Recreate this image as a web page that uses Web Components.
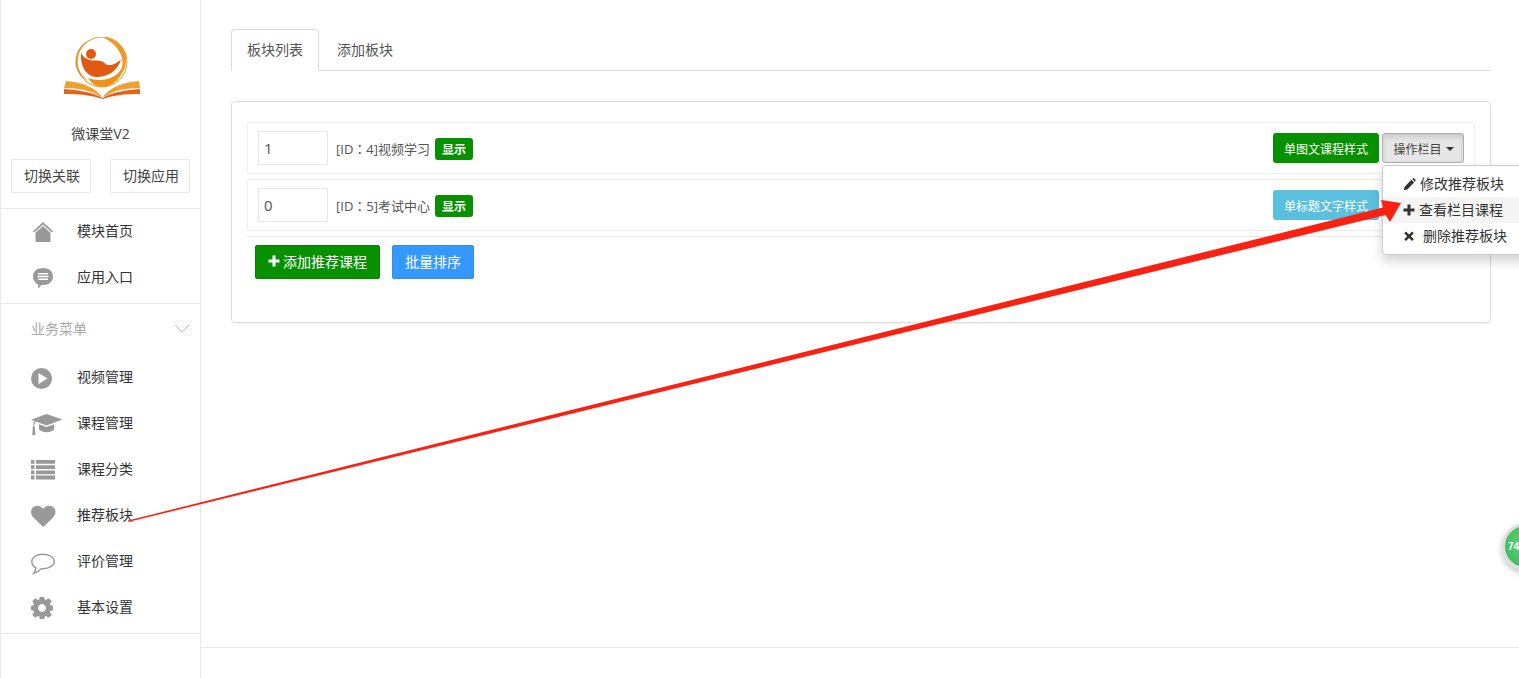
<!DOCTYPE html>
<html lang="zh">
<head>
<meta charset="utf-8">
<title>板块列表</title>
<style>
html, body { margin: 0; height: 100%; overflow: hidden; background: #fff; }
body { font: 14px "Open Sans", "Noto Sans CJK SC", sans-serif; color: #333; }
</style>
</head>
<body>
<wk-app>
  <wk-sidebar slot="side"></wk-sidebar>
  <wk-tabs>
    <span data-active>板块列表</span>
    <span>添加板块</span>
  </wk-tabs>
  <wk-panel>
    <wk-row sort="1" item-id="4" label="视频学习" tag="显示" style-name="单图文课程样式" tone="green" menu></wk-row>
    <wk-row sort="0" item-id="5" label="考试中心" tag="显示" style-name="单标题文字样式" tone="info"></wk-row>
    <wk-actions></wk-actions>
  </wk-panel>
</wk-app>
<wk-arrow></wk-arrow>
<wk-badge>74</wk-badge>

<script>
const FONT = `"Open Sans", "Noto Sans CJK SC", sans-serif`;
const GREEN = "#079100";

const ICONS = {
  home: `<svg viewBox="0 0 20 20" width="20" height="20" style="margin-left:2px"><path d="M10 0 20 9.200 18.800 10.500 10 2.500 1.200 10.500 0 9.200Z"/><path d="M10 4 17.500 10.800V20H2.500V10.800Z"/></svg>`,
  chat: `<svg viewBox="2 2.500 20 20.800" width="20" height="20.800" style="margin-left:2px"><path fill-rule="evenodd" d="M12 2.500C18 2.500 22 6 22 11S18 19.500 12 19.500H10.500L7 23.300 7.200 19C4 17.600 2 14.500 2 11 2 6 6 2.500 12 2.500ZM7 7.500V9H17V7.500ZM6.500 10.300V11.800H17.500V10.300ZM7 13.100V14.600H17V13.100Z"/></svg>`,
  play: `<svg viewBox="1.500 1.500 21 21" width="21" height="21"><path fill-rule="evenodd" d="M12 1.500A10.500 10.500 0 1 1 12 22.500 10.500 10.500 0 0 1 12 1.500ZM9 6.500V17.500L18 12Z"/></svg>`,
  cap: `<svg viewBox="0 0 32 24" width="32" height="24"><path d="M15.500 2 31.500 7.500 15.500 13.500 5 9.600C3.600 11 3.200 12.500 3.300 14.300 4 14.800 4.200 15.600 3.900 16.300L4.400 23H1.200L1.800 16.300C1.500 15.600 1.700 14.800 2.300 14.300 2.200 12.200 2.700 10.500 3.700 9.100L0 7.700Z"/><path d="M8 12.300 15.500 15 23.200 12.200V17.200C21.500 19.200 18.500 20.200 15.500 20.200S9.500 19.200 8 17.300Z"/></svg>`,
  list: `<svg viewBox="0 0 24 20" width="24" height="20"><path d="M0 0H3.500V3.800H0ZM5 0H24V3.800H5ZM0 5.200H3.500V9H0ZM5 5.200H24V9H5ZM0 10.400H3.500V14.200H0ZM5 10.400H24V14.200H5ZM0 15.600H3.500V19.400H0ZM5 15.600H24V19.400H5Z"/></svg>`,
  heart: `<svg viewBox="0 0 1792 1792" width="24.500" height="24.500"><path d="M896 1664q-26 0-44-18l-624-602q-10-8-27.500-26t-55.500-65.500-68-97.500-53.500-121-23.500-138q0-220 127-344t351-124q62 0 126.500 21.500t120 58 95.500 68.500 76 68q36-36 76-68t95.500-68.500 120-58 126.500-21.500q224 0 351 124t127 344q0 221-229 450l-623 600q-18 18-44 18z"/></svg>`,
  bubble: `<svg viewBox="0 0 24 22" width="24" height="22" style="margin-top:3px"><path fill="none" stroke="currentColor" stroke-width="1.400" d="M12 1.200C18.300 1.200 23.200 4.300 23.200 8.500S18.300 15.700 12 15.700H10.300C8.700 17.500 5.700 19.600 2.600 20.400 3.800 19 5 17 5 14.800 2.400 13.500.8 11.200.8 8.500.8 4.300 5.700 1.200 12 1.200Z"/></svg>`,
  gear: `<svg viewBox="176 176 1440 1440" width="22" height="22"><path d="M1152 896q0-106-75-181t-181-75-181 75-75 181 75 181 181 75 181-75 75-181zm512-109v222q0 12-8 23t-20 13l-185 28q-19 54-39 91 35 50 107 138 10 12 10 25t-9 23q-27 37-99 108t-94 71q-12 0-26-9l-138-108q-44 23-91 38-16 136-29 186-7 28-36 28h-222q-14 0-24.500-8.500t-11.500-21.500l-28-184q-49-16-90-37l-141 107q-10 9-25 9-14 0-25-11-126-114-165-168-7-10-7-23 0-12 8-23 15-21 51-66.500t54-70.500q-27-50-41-99l-183-27q-13-2-21-12.500t-8-23.500v-222q0-12 8-23t19-13l186-28q14-46 39-92-40-57-107-138-10-12-10-24 0-10 9-23 26-36 98.500-107.500t94.500-71.500q13 0 26 10l138 107q44-23 91-38 16-136 29-186 7-28 36-28h222q14 0 24.500 8.500t11.500 21.500l28 184q49 16 90 37l142-107q9-9 24-9 13 0 25 10 129 119 165 170 7 8 7 22 0 12-8 23-15 21-51 66.500t-54 70.500q26 50 41 98l183 28q13 2 21 12.500t8 23.500z"/></svg>`,
  plus: `<svg viewBox="0 0 12 12" width="12" height="12"><path d="M4.500 .5H7.500V4.500H11.500V7.500H7.500V11.500H4.500V7.500H.5V4.500H4.500Z"/></svg>`,
  pencil: `<svg viewBox="0 0 12 12" width="13" height="13"><path d="M.8 11.200 1.500 8 7.800 1.700 10.300 4.200 4 10.500ZM8.500 1 9.300.5C9.700.2 10.200.2 10.600.6L11.400 1.400C11.800 1.800 11.800 2.300 11.500 2.700L11 3.500Z"/></svg>`,
  times: `<svg viewBox="0 0 12 12" width="12" height="12"><path d="M3 1.500 6 4.500 9 1.500 10.800 3.300 7.800 6.200 10.800 9.200 9 11 6 8 3 11 1.200 9.200 4.200 6.200 1.200 3.300Z"/></svg>`
};

class WkApp extends HTMLElement {
  constructor() {
    super();
    this.attachShadow({ mode: "open" }).innerHTML = `
      <style>
        :host { display: grid; grid-template-columns: 201px 1fr; height: 678px; font-family: ${FONT}; }
        main { display: flex; flex-direction: column; padding: 29px 28px 0 30px; border-bottom: 1px solid #e7e7eb; height: 648px; box-sizing: border-box; }
        .foot { height: 30px; }
        .col { display: flex; flex-direction: column; min-width: 0; }
      </style>
      <slot name="side"></slot>
      <div class="col">
        <main><slot></slot></main>
        <div class="foot"></div>
      </div>`;
  }
}

class WkSidebar extends HTMLElement {
  constructor() {
    super();
    this.attachShadow({ mode: "open" }).innerHTML = `
      <style>
        :host { display: flex; flex-direction: column; box-sizing: border-box; height: 678px; border-left: 1px solid #e7e7eb; border-right: 1px solid #e7e7eb; color: #333; }
        .head { height: 209px; box-sizing: border-box; border-bottom: 1px solid #e7e7eb; padding-top: 37px; text-align: center; }
        .logo { margin-left: 63px; width: 78px; height: 62px; }
        .name { margin-top: 25px; height: 20px; line-height: 20px; font-size: 14px; color: #444; }
        .btns { display: flex; justify-content: space-between; margin: 15px 10px 0 10px; }
        .btns span { box-sizing: border-box; width: 80px; height: 34px; line-height: 32px; padding-left: 2px; border: 1px solid #e7e7eb; border-radius: 2px; color: #444; }
        .top { height: 95px; box-sizing: border-box; border-bottom: 1px solid #e7e7eb; }
        .group { display: flex; justify-content: space-between; align-items: center; box-sizing: border-box; height: 50px; padding: 0 10px 2px 30px; color: #aaa; }
        .biz { height: 330px; box-sizing: border-box; border-bottom: 1px solid #e7e7eb; }
        .list { padding-top: 1px; }
      </style>
      <div class="head">
        <wk-logo class="logo"></wk-logo>
        <div class="name">微课堂V2</div>
        <div class="btns"><span>切换关联</span><span>切换应用</span></div>
      </div>
      <div class="top">
        <wk-nav icon="home" text="模块首页"></wk-nav>
        <wk-nav icon="chat" text="应用入口"></wk-nav>
      </div>
      <div class="biz">
        <div class="group">业务菜单
          <svg width="16" height="9" viewBox="0 0 16 9"><path d="M1 1 8 8 15 1" fill="none" stroke="#bbb"/></svg>
        </div>
        <div class="list">
          <wk-nav icon="play" text="视频管理"></wk-nav>
          <wk-nav icon="cap" text="课程管理"></wk-nav>
          <wk-nav icon="list" text="课程分类"></wk-nav>
          <wk-nav icon="heart" text="推荐板块"></wk-nav>
          <wk-nav icon="bubble" text="评价管理"></wk-nav>
          <wk-nav icon="gear" text="基本设置"></wk-nav>
        </div>
      </div>`;
  }
}

class WkNav extends HTMLElement {
  constructor() {
    super();
    this.attachShadow({ mode: "open" }).innerHTML = `
      <style>
        :host { display: flex; align-items: center; box-sizing: border-box; height: 46px; padding: 0 0 4px 30px; color: #333; }
        i { display: flex; align-items: center; width: 46px; padding-top: 4px; color: #999; fill: #999; }
      </style>
      <i>${ICONS[this.getAttribute("icon")]}</i><span>${this.getAttribute("text")}</span>`;
  }
}

class WkLogo extends HTMLElement {
  constructor() {
    super();
    this.attachShadow({ mode: "open" }).innerHTML = `
      <style>:host { display: block; } svg { display: block; }</style>
      <svg viewBox="0 0 78 62" width="78" height="62">
        <circle cx="38" cy="25" r="25" fill="none" stroke="#ef9a2d" stroke-width="1"/>
        <path d="M38 0C50 0 60 8 62 19 63 27 60 35 55 40 59 32 60 24 56 16 52 8 45 3 38 0Z" fill="#ef9a2d"/>
        <path d="M30 1.500C19 5 12 15 13.500 27 14.500 34 18 39 24 43.500 16 40 11.500 33 11.500 25 11.500 13 19 4 30 1.500Z" fill="#ec8b20"/>
        <circle cx="27" cy="17" r="5" fill="#e05a12"/>
        <path d="M17 16C20 21 24 23 29 23.500 35 23 40 24 42 27.500 47 29 52 27 57 22.500 54 33 45 39.500 34 40 23 40.500 16 30 17 16Z" fill="#e05a12"/>
        <path d="M60 25C58 35 50 41 41 42.500 35 43.500 29 43 24 41 27 47 34 51 42 49.500 52 47 60 38 60 25Z" fill="#ee9316"/>
        <path d="M2 44C15 45 29 49 37 58.500V60C29 54 15 51 0 51Z" fill="#f0a030"/>
        <path d="M75 44C62 45 48 49 40 58.500V60C48 54 62 51 76 51Z" fill="#f0a030"/>
        <path d="M0 52C14 53 29 55 38.500 61 48 55 62 53 76 52V57C62 57 50 58 38.500 62 27 58 14 57 0 57Z" fill="#e2631a"/>
      </svg>`;
  }
}

class WkTabs extends HTMLElement {
  constructor() {
    super();
    this.attachShadow({ mode: "open" }).innerHTML = `
      <style>
        :host { display: flex; height: 42px; box-sizing: border-box; border-bottom: 1px solid #ddd; color: #555; }
        ::slotted(span) { box-sizing: border-box; height: 42px; line-height: 40px; padding: 0 15px; white-space: nowrap; border: 1px solid transparent; border-radius: 4px 4px 0 0; margin-right: 2px; }
        ::slotted([data-active]) { border-color: #ddd #ddd #fff; background: #fff; }
      </style>
      <slot></slot>`;
  }
}

class WkPanel extends HTMLElement {
  constructor() {
    super();
    this.attachShadow({ mode: "open" }).innerHTML = `
      <style>
        :host { display: block; box-sizing: border-box; margin-top: 30px; height: 222px; padding: 20px 15px 0; border: 1px solid #ddd; border-radius: 4px; box-shadow: 0 1px 1px rgba(0,0,0,.05); }
      </style>
      <slot></slot>`;
  }
}

class WkDropdown extends HTMLElement {
  constructor() {
    super();
    this.attachShadow({ mode: "open" }).innerHTML = `
      <style>
        :host { display: block; position: relative; margin-left: 3px; font-size: 12px; color: #333; }
        .toggle { display: flex; align-items: center; justify-content: center; gap: 3px; box-sizing: border-box; width: 82px; height: 30px; padding: 1px 0 0 1px; background: #e6e6e6; border: 1px solid #adadad; border-radius: 3px; box-shadow: inset 0 3px 5px rgba(0,0,0,.125); color: #444; }
        .caret { width: 0; height: 0; border: 4px solid transparent; border-top-color: #333; border-bottom: 0; margin-left: 1px; }
        ul { position: absolute; top: 32px; left: 0; width: 160px; box-sizing: border-box; margin: 0; padding: 5px 0; list-style: none; background: #fff; border: 1px solid #ccc; border-radius: 4px; box-shadow: 0 6px 12px rgba(0,0,0,.175); font-size: 14px; color: #333; }
        li { display: flex; align-items: center; height: 26px; padding-left: 20px; }
        li span { position: relative; top: -1px; }
        li svg { fill: #333; margin-right: 4px; }
        .c svg { margin-right: 8px; }
        li.on { background: #f5f5f5; }
      </style>
      <div class="toggle">操作栏目<span class="caret"></span></div>
      <ul>
        <li>${ICONS.pencil}<span>修改推荐板块</span></li>
        <li class="on">${ICONS.plus}<span>查看栏目课程</span></li>
        <li class="c">${ICONS.times}<span>删除推荐板块</span></li>
      </ul>`;
  }
}

class WkRow extends HTMLElement {
  constructor() {
    super();
    const tone = this.getAttribute("tone") === "info" ? "#5bc0de" : GREEN;
    this.attachShadow({ mode: "open" }).innerHTML = `
      <style>
        :host { display: flex; align-items: center; box-sizing: border-box; height: 52px; margin-bottom: 5px; padding: 0 10px; border: 1px solid #eee; border-radius: 3px; font-size: 13px; color: #555; }
        .sort { display: flex; align-items: center; box-sizing: border-box; width: 70px; height: 34px; padding-left: 5px; border: 1px solid #e5e6e7; font-size: 15px; color: #555; }
        .label { margin-left: 8px; }
        .colon { font-family: "Noto Sans CJK TC", sans-serif; }
        .tag { display: flex; align-items: center; justify-content: center; margin: 1px 0 0 5px; width: 38px; height: 22px; border-radius: 3px; background: ${GREEN}; color: #fff; font-size: 12px; font-weight: 700; }
        .right { margin-left: auto; display: flex; align-items: center; }
        .style { display: flex; align-items: center; justify-content: center; box-sizing: border-box; width: 106px; height: 30px; padding-top: 1px; border-radius: 3px; background: ${tone}; color: #fff; font-size: 12px; }
        .spacer { width: 85px; }
      </style>
      <span class="sort">${this.getAttribute("sort")}</span>
      <span class="label">[ID<span class="colon" lang="zh-Hant">：</span>${this.getAttribute("item-id")}]${this.getAttribute("label")}</span>
      <span class="tag">${this.getAttribute("tag")}</span>
      <div class="right">
        <span class="style">${this.getAttribute("style-name")}</span>
        ${this.hasAttribute("menu") ? "<wk-dropdown></wk-dropdown>" : '<div class="spacer"></div>'}
      </div>`;
  }
}

class WkActions extends HTMLElement {
  constructor() {
    super();
    this.attachShadow({ mode: "open" }).innerHTML = `
      <style>
        :host { display: flex; gap: 12px; box-sizing: border-box; border-top: 1px solid #e7e7eb; padding: 8px 8px 0; }
        span { box-sizing: border-box; display: flex; align-items: center; justify-content: center; height: 34px; padding-bottom: 2px; border-radius: 2px; color: #fff; }
        .add { width: 125px; background: ${GREEN}; border: 1px solid #068000; gap: 3px; }
        .add svg { fill: #fff; }
        .batch { width: 82px; background: #39f; border: 1px solid #2e8fef; }
      </style>
      <span class="add">${ICONS.plus}添加推荐课程</span>
      <span class="batch">批量排序</span>`;
  }
}

class WkArrow extends HTMLElement {
  constructor() {
    super();
    // annotation drawn on top of the screenshot
    this.attachShadow({ mode: "open" }).innerHTML = `
      <style>:host { position: absolute; inset: 0; pointer-events: none; } svg { display: block; }</style>
      <svg width="1519" height="678" viewBox="0 0 1519 678">
        <path d="M128 520.500 1383 207.500 1381 200 1401 203 1390 222 1385.500 215 128 522Z" fill="#fa2113"/>
      </svg>`;
  }
}

class WkBadge extends HTMLElement {
  constructor() {
    super();
    this.attachShadow({ mode: "open" }).innerHTML = `
      <style>
        :host { position: absolute; left: 1502px; top: 523px; width: 47px; height: 47px; box-sizing: border-box; border: 3px solid #dcdfdc; border-radius: 50%; background: radial-gradient(circle at 50% 40%, #5fd27a, #36b552); box-shadow: 0 3px 6px rgba(0,0,0,.25); color: #fff; font: 700 10px/41px "Liberation Sans", sans-serif; padding-left: 3px; }
      </style>
      <slot></slot>`;
  }
}

customElements.define("wk-logo", WkLogo);
customElements.define("wk-nav", WkNav);
customElements.define("wk-sidebar", WkSidebar);
customElements.define("wk-tabs", WkTabs);
customElements.define("wk-panel", WkPanel);
customElements.define("wk-dropdown", WkDropdown);
customElements.define("wk-row", WkRow);
customElements.define("wk-actions", WkActions);
customElements.define("wk-arrow", WkArrow);
customElements.define("wk-badge", WkBadge);
customElements.define("wk-app", WkApp);
</script>
</body>
</html>
